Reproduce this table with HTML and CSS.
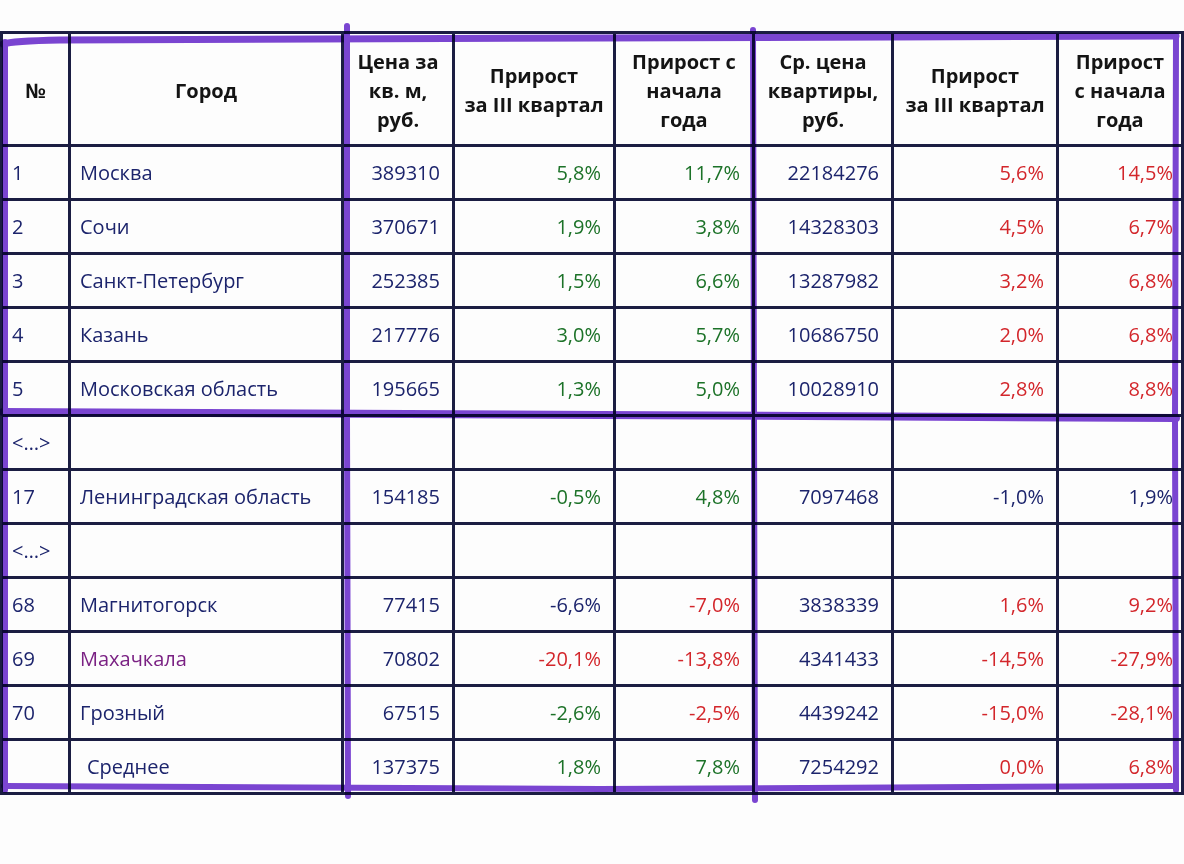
FILE: index.html
```html
<!DOCTYPE html>
<html lang="ru">
<head>
<meta charset="utf-8">
<title>Цены на жильё</title>
<link rel="stylesheet" href="styles.css">
</head>
<body>
<div class="sheet">
<table class="grid">
<colgroup>
<col class="c1"><col class="c2"><col class="c3"><col class="c4"><col class="c5"><col class="c6"><col class="c7"><col class="c8">
</colgroup>
<thead>
<tr>
<th>№</th>
<th>Город</th>
<th>Цена за<br>кв. м,<br>руб.</th>
<th>Прирост<br>за III квартал</th>
<th>Прирост с<br>начала<br>года</th>
<th>Ср. цена<br>квартиры,<br>руб.</th>
<th>Прирост<br>за III квартал</th>
<th>Прирост<br>с начала<br>года</th>
</tr>
</thead>
<tbody>
<tr><td>1</td><td>Москва</td><td class="n">389310</td><td class="n g">5,8%</td><td class="n g">11,7%</td><td class="n">22184276</td><td class="n r">5,6%</td><td class="n r last">14,5%</td></tr>
<tr><td>2</td><td>Сочи</td><td class="n">370671</td><td class="n g">1,9%</td><td class="n g">3,8%</td><td class="n">14328303</td><td class="n r">4,5%</td><td class="n r last">6,7%</td></tr>
<tr><td>3</td><td>Санкт-Петербург</td><td class="n">252385</td><td class="n g">1,5%</td><td class="n g">6,6%</td><td class="n">13287982</td><td class="n r">3,2%</td><td class="n r last">6,8%</td></tr>
<tr><td>4</td><td>Казань</td><td class="n">217776</td><td class="n g">3,0%</td><td class="n g">5,7%</td><td class="n">10686750</td><td class="n r">2,0%</td><td class="n r last">6,8%</td></tr>
<tr><td>5</td><td>Московская область</td><td class="n">195665</td><td class="n g">1,3%</td><td class="n g">5,0%</td><td class="n">10028910</td><td class="n r">2,8%</td><td class="n r last">8,8%</td></tr>
<tr><td>&lt;…&gt;</td><td></td><td></td><td></td><td></td><td></td><td></td><td class="last"></td></tr>
<tr><td>17</td><td>Ленинградская область</td><td class="n">154185</td><td class="n g">-0,5%</td><td class="n g">4,8%</td><td class="n">7097468</td><td class="n">-1,0%</td><td class="n last">1,9%</td></tr>
<tr><td>&lt;…&gt;</td><td></td><td></td><td></td><td></td><td></td><td></td><td class="last"></td></tr>
<tr><td>68</td><td>Магнитогорск</td><td class="n">77415</td><td class="n">-6,6%</td><td class="n r">-7,0%</td><td class="n">3838339</td><td class="n r">1,6%</td><td class="n r last">9,2%</td></tr>
<tr><td>69</td><td class="p">Махачкала</td><td class="n">70802</td><td class="n r">-20,1%</td><td class="n r">-13,8%</td><td class="n">4341433</td><td class="n r">-14,5%</td><td class="n r last">-27,9%</td></tr>
<tr><td>70</td><td>Грозный</td><td class="n">67515</td><td class="n g">-2,6%</td><td class="n r">-2,5%</td><td class="n">4439242</td><td class="n r">-15,0%</td><td class="n r last">-28,1%</td></tr>
<tr><td></td><td class="avg">Среднее</td><td class="n">137375</td><td class="n g">1,8%</td><td class="n g">7,8%</td><td class="n">7254292</td><td class="n r">0,0%</td><td class="n r last">6,8%</td></tr>
</tbody>
</table>
<svg class="marker" width="1184" height="864" viewBox="0 0 1184 864" aria-hidden="true">
<g fill="none" stroke="#6d30cf" stroke-linecap="round" stroke-linejoin="round">
<path d="M3 44 Q 12 41 60 40 L 600 38 L 1176 36" stroke-width="7"/>
<path d="M5 42 L 5 790" stroke-width="6"/>
<path d="M347 26 L 347 420 L 348 796" stroke-width="6"/>
<path d="M753 30 L 754 420 L 755 800" stroke-width="6"/>
<path d="M1176 36 L 1175 420 L 1176 790" stroke-width="6"/>
<path d="M3 412 L 600 415 L 1176 418" stroke-width="8"/>
<path d="M4 786 L 600 789 L 1176 786" stroke-width="6"/>
</g>
</svg>
</div>
</body>
</html>
```
FILE: styles.css
```css
html, body {
  margin: 0;
  padding: 0;
  background: #fdfdfd;
}
body {
  font-family: "Open Sans", "Noto Sans", "DejaVu Sans", sans-serif;
  width: 1184px;
  height: 864px;
  overflow: hidden;
}
.sheet {
  position: relative;
  width: 1184px;
  height: 864px;
  padding-top: 31px;
  box-sizing: border-box;
}
.grid {
  border-collapse: collapse;
  table-layout: fixed;
  width: 1181px;
  margin-left: 0;
  font-size: 20px;
  font-weight: 500;
  color: #1c246c;
}
.c1 { width: 68px; }
.c2 { width: 273px; }
.c3 { width: 111px; }
.c4 { width: 161px; }
.c5 { width: 139px; }
.c6 { width: 139px; }
.c7 { width: 165px; }
.c8 { width: 125px; }
.grid th, .grid td {
  border: 3px solid #1b1d42;
  padding: 0 9px;
  vertical-align: middle;
  white-space: nowrap;
}
.grid thead tr { height: 113px; }
.grid tbody tr { height: 54px; }
.grid th {
  font-weight: 700;
  color: #141414;
  line-height: 29px;
  text-align: center;
  padding: 2px 4px 0;
}
.grid td { line-height: 24px; text-align: left; }
.grid td.n { text-align: right; padding-right: 12px; }
.grid td.last { padding-right: 8px; }
.grid td.g { color: #1c7228; }
.grid td.r { color: #d3262b; }
.grid td.p { color: #7a2183; }
.grid td.avg { padding-left: 16px; }
.marker {
  position: absolute;
  left: 0;
  top: 0;
  pointer-events: none;
  mix-blend-mode: multiply;
  opacity: 0.9;
}
```
